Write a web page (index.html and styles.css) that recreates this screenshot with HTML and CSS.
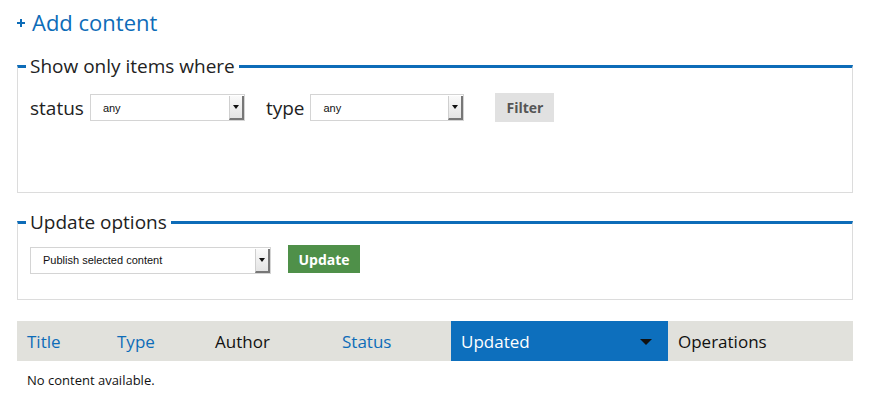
FILE: index.html
```html
<!DOCTYPE html>
<html>
<head>
<meta charset="utf-8">
<link rel="stylesheet" href="styles.css">
</head>
<body>
<div class="page">
  <a class="add-link" href="#"><span class="plus"></span>Add content</a>

  <fieldset class="box box-filter">
    <legend>Show only items where</legend>
    <div class="filter-row">
      <label class="lbl">status</label>
      <div class="select sel-status"><span class="sel-text">any</span><span class="sel-arrow"><span class="tri"></span></span></div>
      <label class="lbl lbl-type">type</label>
      <div class="select sel-type"><span class="sel-text">any</span><span class="sel-arrow"><span class="tri"></span></span></div>
      <button class="btn btn-filter">Filter</button>
    </div>
  </fieldset>

  <fieldset class="box box-update">
    <legend>Update options</legend>
    <div class="update-row">
      <div class="select sel-action"><span class="sel-text">Publish selected content</span><span class="sel-arrow"><span class="tri"></span></span></div>
      <button class="btn btn-update">Update</button>
    </div>
  </fieldset>

  <table class="content-table">
    <thead>
      <tr>
        <th class="c-title"><a href="#">Title</a></th>
        <th class="c-type"><a href="#">Type</a></th>
        <th class="c-author">Author</th>
        <th class="c-status"><a href="#">Status</a></th>
        <th class="c-updated active"><span>Updated</span><span class="sort-tri"></span></th>
        <th class="c-ops">Operations</th>
      </tr>
    </thead>
    <tbody>
      <tr><td colspan="6" class="empty">No content available.</td></tr>
    </tbody>
  </table>
</div>
</body>
</html>
```
FILE: styles.css
```css
* { box-sizing: border-box; }
html, body { margin: 0; padding: 0; background: #fff; }
body {
  font-family: "Open Sans", "Noto Sans", sans-serif;
  color: #222;
}
.page {
  width: 871px;
  padding: 8px 18px 0 17px;
}
.add-link {
  display: inline-flex;
  align-items: center;
  color: #0d6cb8;
  text-decoration: none;
  font-size: 22px;
  line-height: 28px;
}
.plus {
  position: relative;
  width: 8px;
  height: 8px;
  margin-right: 7px;
  margin-top: 1px;
}
.plus::before, .plus::after {
  content: "";
  position: absolute;
  background: #0d6cb8;
}
.plus::before { left: 0; top: 3px; width: 8px; height: 2px; }
.plus::after { left: 3px; top: 0; width: 2px; height: 8px; }
.box {
  margin: 0;
  padding: 0 12px;
  border: 1px solid #dcdcdc;
  border-top: 3px solid #0d6cb8;
  min-width: 0;
}
.box legend {
  font-size: 19px;
  line-height: 24px;
  color: #222;
  padding: 0 4px;
  margin-left: -4px;
}
.box-filter {
  margin-top: 18px;
  height: 139px;
}
.filter-row {
  display: flex;
  align-items: center;
  margin-top: 15px;
}
.lbl {
  font-size: 19px;
  margin-right: 6px;
}
.lbl-type { margin-left: 21px; margin-right: 6px; }
.select {
  position: relative;
  display: flex;
  align-items: center;
  height: 27px;
  border: 1px solid #d4d4d4;
  background: #fff;
  font-family: "Liberation Sans", Arial, sans-serif;
  font-size: 11px;
  color: #111;
}
.sel-text { flex: 1; padding-left: 12px; }
.sel-arrow {
  width: 15px;
  align-self: stretch;
  margin: 1px 0 0 0;
  background: linear-gradient(#fafafa, #e4e4e4);
  border-left: 1px solid #cfcfcf;
  border-right: 2px solid #777;
  border-bottom: 2px solid #777;
  display: flex;
  align-items: center;
  justify-content: center;
}
.tri {
  width: 0; height: 0;
  border-left: 3px solid transparent;
  border-right: 3px solid transparent;
  border-top: 4px solid #111;
}
.sel-status { width: 155px; }
.sel-type { width: 154px; }
.btn {
  border: 0;
  font-family: "Open Sans", sans-serif;
  font-weight: 700;
  font-size: 14px;
  cursor: pointer;
}
.btn-filter {
  margin-left: 31px;
  width: 59px;
  height: 29px;
  background: #e1e1e1;
  color: #555;
}
.box-update {
  margin-top: 17px;
  height: 90px;
}
.update-row {
  display: flex;
  align-items: center;
  margin-top: 12px;
}
.sel-action { width: 241px; font-size: 11px; }
.btn-update {
  margin-left: 17px;
  width: 72px;
  height: 28px;
  background: #4f9049;
  color: #fff;
  font-size: 14px;
  position: relative;
  top: -1px;
}
.content-table {
  margin-top: 21px;
  width: 836px;
  border-collapse: collapse;
  table-layout: fixed;
}
.content-table th {
  background: #e1e1dc;
  height: 40px;
  padding: 0 0 0 10px;
  text-align: left;
  font-weight: 400;
  font-size: 17px;
  color: #111;
}
.content-table th a { color: #0d6cb8; text-decoration: none; }
.c-title { width: 90px; }
.c-type { width: 98px; }
.c-author { width: 127px; }
.c-status { width: 119px; }
.c-updated { width: 217px; }
.content-table th.active {
  background: #0d6fbd;
  color: #fff;
  position: relative;
}
.sort-tri {
  position: absolute;
  right: 16px;
  top: 18px;
  width: 0; height: 0;
  border-left: 6px solid transparent;
  border-right: 6px solid transparent;
  border-top: 6px solid #111;
}
.empty {
  padding: 10px 10px;
  font-size: 13px;
  color: #111;
}
```
